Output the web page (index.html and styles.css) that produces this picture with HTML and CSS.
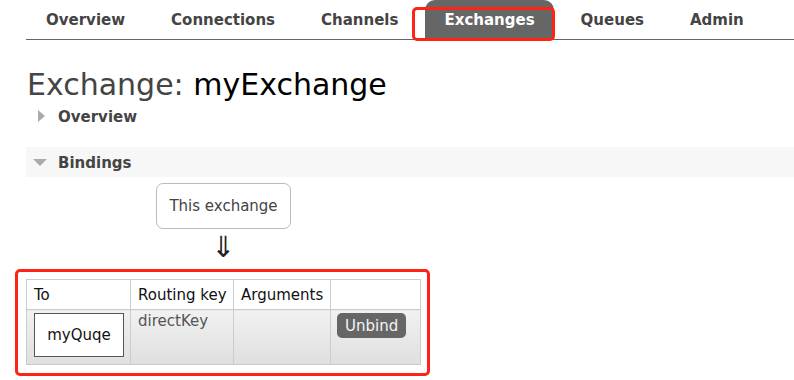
FILE: index.html
```html
<!DOCTYPE html>
<html lang="en">
<head>
  <meta charset="UTF-8">
  <title>RabbitMQ Management - Exchange: myExchange</title>
  <link rel="stylesheet" href="styles.css">
</head>
<body>
  <div id="header">
    <ul id="tabs">
      <li><a href="#overview">Overview</a></li>
      <li><a href="#connections">Connections</a></li>
      <li><a href="#channels">Channels</a></li>
      <li class="active"><a href="#exchanges">Exchanges</a><span class="mark mark-tab"></span></li>
      <li><a href="#queues">Queues</a></li>
      <li><a href="#admin">Admin</a></li>
    </ul>
  </div>

  <div id="main">
    <h1>Exchange: <b>myExchange</b></h1>

    <div class="section-hidden">
      <h2>Overview</h2>
    </div>

    <div class="section">
      <h2>Bindings</h2>
      <div class="hider">
        <div class="bindings-wrapper">
          <span class="exchange">This exchange</span>
          <p class="arrow">&#8659;</p>
          <div class="table-wrap">
            <table class="list">
              <colgroup>
                <col class="col-to">
                <col class="col-key">
                <col class="col-args">
                <col class="col-action">
              </colgroup>
              <thead>
                <tr>
                  <th>To</th>
                  <th>Routing key</th>
                  <th>Arguments</th>
                  <th></th>
                </tr>
              </thead>
              <tbody>
                <tr>
                  <td><span class="queue">myQuqe</span></td>
                  <td class="key">directKey</td>
                  <td></td>
                  <td><button class="unbind">Unbind</button></td>
                </tr>
              </tbody>
            </table>
            <span class="mark mark-table"></span>
          </div>
        </div>
      </div>
    </div>
  </div>
</body>
</html>
```
FILE: styles.css
```css
html {
  background: #fff;
}

body {
  font-family: "DejaVu Sans", Verdana, sans-serif;
  font-size: 15px;
  color: #444;
  margin: 0;
  padding: 0 0 0 26px;
  min-height: 380px;
}

/* top navigation */
#tabs {
  list-style: none;
  margin: 0;
  padding: 0 0 0 1px;
  display: flex;
  height: 39px;
  border-bottom: 1px solid #666;
}

#tabs li {
  position: relative;
  margin-right: 8px;
}

#tabs a {
  display: block;
  height: 39px;
  line-height: 40px;
  padding: 0 19px;
  font-weight: bold;
  color: #444;
  text-decoration: none;
  border-radius: 10px 10px 0 0;
}

#tabs li.active a {
  background: #666;
  color: #fff;
}

/* red highlight marks */
.mark {
  position: absolute;
  border: 3px solid #ff2217;
  border-radius: 5px;
  pointer-events: none;
}

.mark-tab {
  left: -13px;
  top: 7px;
  right: -1px;
  bottom: -2px;
}

.mark-table {
  left: -11px;
  top: -10px;
  right: -9px;
  bottom: -11px;
}

/* page title */
h1 {
  font-size: 30px;
  font-weight: normal;
  line-height: 33px;
  margin: 28px 0 0 1px;
  color: #444;
}

h1 b {
  font-weight: normal;
  color: #000;
}

/* sections */
h2 {
  font-size: 15px;
  font-weight: bold;
  line-height: 32px;
  height: 30px;
  margin: 0;
  padding-left: 32px;
  position: relative;
  color: #444;
}

h2::before {
  content: "";
  position: absolute;
  width: 0;
  height: 0;
}

.section-hidden h2::before {
  left: 12px;
  top: 9px;
  border-top: 6px solid transparent;
  border-bottom: 6px solid transparent;
  border-left: 7px solid #aaa;
}

.section h2 {
  background: #f7f7f7;
}

.section h2::before {
  left: 7px;
  top: 12px;
  border-left: 7px solid transparent;
  border-right: 7px solid transparent;
  border-top: 7px solid #aaa;
}

.section {
  margin-top: 16px;
}

.hider {
  padding: 6px 0 14px;
}

/* bindings diagram */
.bindings-wrapper {
  display: inline-block;
  text-align: center;
}

.exchange {
  display: inline-block;
  border: 1px solid #bbb;
  border-radius: 7px;
  padding: 12px 12px;
  line-height: 20px;
  color: #444;
}

.arrow {
  font-size: 29px;
  line-height: 28px;
  margin: 4px 0 18px;
  color: #222;
}

.table-wrap {
  position: relative;
  text-align: left;
}

table.list {
  border-collapse: collapse;
  border: 1px solid #ccc;
  table-layout: fixed;
  width: 394px;
}

.col-to { width: 104px; }
.col-key { width: 103px; }
.col-args { width: 97px; }
.col-action { width: 90px; }

table.list th,
table.list td {
  border: 1px solid #ccc;
  text-align: left;
  vertical-align: top;
  line-height: 20px;
  white-space: nowrap;
  overflow: hidden;
}

table.list th {
  font-weight: normal;
  color: #111;
  background: #fff;
  height: 29px;
  padding: 0 7px;
  vertical-align: middle;
}

table.list td {
  background: linear-gradient(#f1f1f1, #dfdfdf);
  padding: 1px 7px;
  height: 52px;
}

.queue {
  display: block;
  width: 88px;
  margin: 2px 0 0 0;
  border: 1px solid #555;
  background: #fff;
  line-height: 42px;
  text-align: center;
  color: #111;
}

.key {
  color: #555;
}

.unbind {
  font-family: "DejaVu Sans", Verdana, sans-serif;
  font-size: 15px;
  line-height: 20px;
  margin: 2px 0 0 -1px;
  padding: 3px 8px 2px;
  border: none;
  border-radius: 5px;
  background: #666;
  color: #f4f4f4;
  cursor: pointer;
}
```
